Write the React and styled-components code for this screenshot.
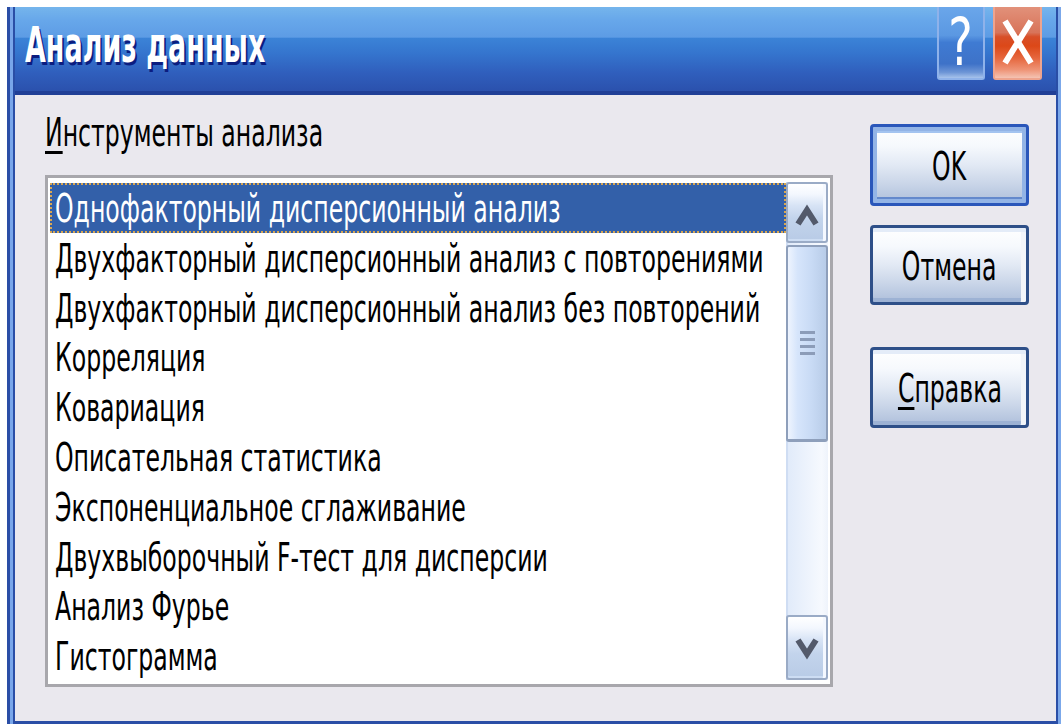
import React from 'react';
import styled, { createGlobalStyle } from 'styled-components';

const GlobalStyle = createGlobalStyle`
  html, body {
    margin: 0;
    padding: 0;
    background: #ffffff;
  }
  body {
    font-family: "DejaVu Sans", "Liberation Sans", sans-serif;
  }
`;

const Page = styled.div`
  width: 1061px;
  height: 724px;
  box-sizing: border-box;
  padding: 7px 0 0 7px;
  overflow: hidden;
`;

/* Window frame: dark / light / dark strips on the left, dark / light on the right */
const Window = styled.div`
  height: 100%;
  box-sizing: border-box;
  display: flex;
  flex-direction: column;
  padding: 0 5px 3px 8px;
  background: linear-gradient(
    to right,
    #2a4ea6 0 3px,
    #79a6ea 3px 6px,
    #2a4ea6 6px calc(100% - 3px),
    #7ba8ea calc(100% - 3px)
  );
`;

const TitleBar = styled.div`
  height: 84px;
  flex: none;
  border-bottom: 4px solid #213f96;
  display: flex;
  align-items: flex-start;
  padding: 0 14px 0 10px;
  background: linear-gradient(
    to bottom,
    #75b5ec 0%,
    #67a7ea 16%,
    #5d9ce5 36%,
    #3b83d7 37%,
    #3575ce 55%,
    #305fbd 78%,
    #2b51ad 100%
  );
`;

const Caption = styled.div`
  flex: 1;
  margin-top: 14px;
  font-size: 49px;
  line-height: 49px;
  font-weight: bold;
  color: #ffffff;
  text-shadow: 3px 3px 0 #0b1d80;
`;

/* Condensed text run: the dialog's face is narrow and tall */
const Txt = styled.span`
  display: inline-block;
  white-space: nowrap;
  transform: scaleX(${(p) => p.$sx || 0.605});
  transform-origin: ${(p) => p.$origin || 'left'} center;
`;

const Key = styled.span`
  text-decoration: underline;
  text-decoration-thickness: 3px;
  text-underline-offset: 5px;
`;

const CaptionButtons = styled.div`
  display: flex;
  gap: 8px;
`;

const HelpButton = styled.div`
  width: 48px;
  height: 73px;
  box-sizing: border-box;
  border: 2px solid #8fb2ea;
  border-top: none;
  border-radius: 0 0 3px 3px;
  background: linear-gradient(
    to bottom,
    #6aa6ea 0%,
    #5b98e2 40%,
    #3f7bd3 50%,
    #3e72c8 80%,
    #6d95d6 92%,
    #a7c3ec 100%
  );
  color: #ffffff;
  font-size: 66px;
  line-height: 66px;
  display: flex;
  justify-content: center;
  padding-top: 3px;
`;

const CloseButton = styled.div`
  width: 49px;
  height: 73px;
  box-sizing: border-box;
  border: 2px solid #eea48e;
  border-top: none;
  border-radius: 0 0 3px 3px;
  background: linear-gradient(
    to bottom,
    #e2917a 0%,
    #d8745a 36%,
    #d84f28 42%,
    #dc4818 55%,
    #e6673e 72%,
    #ee9274 88%,
    #f4c3b3 100%
  );
  display: flex;
  justify-content: center;
  align-items: flex-start;
`;

const Body = styled.div`
  flex: 1;
  background: #eae8ee;
  display: grid;
  grid-template-columns: 788px 159px;
  column-gap: 37px;
  padding-left: 30px;
  align-items: start;
  font-size: 39px;
  color: #000000;
`;

const LeftColumn = styled.div`
  display: flex;
  flex-direction: column;
`;

const FieldLabel = styled.div`
  height: 80px;
  box-sizing: border-box;
  padding-top: 15px;
  line-height: 45px;
`;

const ListBox = styled.div`
  height: 512px;
  box-sizing: border-box;
  border: 3px solid #a8a7ac;
  padding: 4px 2px 4px 2px;
  background: #ffffff;
  display: flex;
`;

const Rows = styled.div`
  flex: 1;
  overflow: hidden;
  padding-top: 1px;
`;

const Row = styled.div`
  height: 49.8px;
  box-sizing: border-box;
  line-height: 52px;
  padding-left: 5px;
  overflow: hidden;
  color: ${(p) => (p.$selected ? '#ffffff' : '#000000')};
  background: ${(p) => (p.$selected ? '#3360a9' : 'transparent')};
  outline: ${(p) => (p.$selected ? '2px dotted #d9a650' : 'none')};
  outline-offset: -2px;
`;

const ScrollBar = styled.div`
  width: 42px;
  display: flex;
  flex-direction: column;
  background: linear-gradient(to right, #cfddf3 0 2px, #e1ebfa 2px, #f6f9fe 85%, #eef3fb);
`;

const ScrollButton = styled.div`
  height: ${(p) => p.$h}px;
  flex: none;
  box-sizing: border-box;
  border: 2px solid #9aabc6;
  border-radius: 3px;
  background: linear-gradient(
    to bottom,
    #ffffff 0%,
    #f3f7fe 18%,
    #d7e3f5 38%,
    #c3d4ec 60%,
    #b8cbe6 100%
  );
  box-shadow: inset -3px 0 0 #f4f8ff, inset 0 -2px 0 #cdddf3;
  display: flex;
  justify-content: center;
`;

const Thumb = styled.div`
  height: 197px;
  flex: none;
  margin-top: 2px;
  box-sizing: border-box;
  border: 2px solid #8e9fbb;
  border-bottom-width: 3px;
  border-radius: 3px;
  background: linear-gradient(to right, #eef4fe 0%, #d6e5fb 25%, #c9dbf5 60%, #b8cce8 100%);
  display: flex;
  flex-direction: column;
  align-items: center;
  justify-content: center;
  gap: 4px;
`;

const Grip = styled.div`
  width: 15px;
  height: 3px;
  background: #8c9cb8;
`;

const Track = styled.div`
  flex: 1;
`;

const RightColumn = styled.div`
  padding-top: 29px;
  display: flex;
  flex-direction: column;
`;

const PushButton = styled.div`
  width: 159px;
  height: ${(p) => p.$h}px;
  margin-bottom: ${(p) => p.$mb || 0}px;
  box-sizing: border-box;
  border: 3px solid ${(p) => (p.$default ? '#2a56ba' : '#2e4f88')};
  border-radius: 4px;
  background: linear-gradient(
    to bottom,
    #ffffff 0%,
    #f6f9fd 25%,
    #e2e9f4 50%,
    #c9d5e8 75%,
    #aebfdb 100%
  );
  box-shadow: ${(p) =>
    p.$default
      ? 'inset 0 0 0 4px #93b4e6, inset 0 6px 0 #a4c4f0, inset 0 -6px 0 #6489cc'
      : 'inset 0 4px 0 #e4ecf8, inset -5px 0 0 #f2f5fa, inset 0 -4px 0 #9db2d4'};
  display: flex;
  align-items: center;
  justify-content: center;
  line-height: 45px;
  padding-top: 2px;
`;

const items = [
  'Однофакторный дисперсионный анализ',
  'Двухфакторный дисперсионный анализ с повторениями',
  'Двухфакторный дисперсионный анализ без повторений',
  'Корреляция',
  'Ковариация',
  'Описательная статистика',
  'Экспоненциальное сглаживание',
  'Двухвыборочный F-тест для дисперсии',
  'Анализ Фурье',
  'Гистограмма',
];

const ArrowUp = () => (
  <svg width="26" height="30" viewBox="0 0 26 30" style={{ marginTop: 15 }}>
    <path d="M4 25 L13 11 L22 25" fill="none" stroke="#535a6b" strokeWidth="6" />
  </svg>
);

const ArrowDown = () => (
  <svg width="26" height="30" viewBox="0 0 26 30" style={{ marginTop: 18 }}>
    <path d="M4 5 L13 19 L22 5" fill="none" stroke="#535a6b" strokeWidth="6" />
  </svg>
);

const CloseGlyph = () => (
  <svg width="32" height="46" viewBox="0 0 32 46" style={{ marginTop: 12 }}>
    <path d="M3 2 L29 44 M29 2 L3 44" stroke="#ffffff" strokeWidth="6" />
  </svg>
);

export default function App() {
  return (
    <>
      <GlobalStyle />
      <Page>
        <Window>
          <TitleBar>
            <Caption>
              <Txt $sx={0.55}>Анализ данных</Txt>
            </Caption>
            <CaptionButtons>
              <HelpButton>
                <Txt $sx={0.7} $origin="center">?</Txt>
              </HelpButton>
              <CloseButton>
                <CloseGlyph />
              </CloseButton>
            </CaptionButtons>
          </TitleBar>
          <Body>
            <LeftColumn>
              <FieldLabel>
                <Txt>
                  <Key>И</Key>нструменты анализа
                </Txt>
              </FieldLabel>
              <ListBox>
                <Rows>
                  {items.map((t, i) => (
                    <Row key={t} $selected={i === 0}>
                      <Txt>{t}</Txt>
                    </Row>
                  ))}
                </Rows>
                <ScrollBar>
                  <ScrollButton $h={61}>
                    <ArrowUp />
                  </ScrollButton>
                  <Thumb>
                    <Grip />
                    <Grip />
                    <Grip />
                    <Grip />
                  </Thumb>
                  <Track />
                  <ScrollButton $h={65}>
                    <ArrowDown />
                  </ScrollButton>
                </ScrollBar>
              </ListBox>
            </LeftColumn>
            <RightColumn>
              <PushButton $h={82} $mb={19} $default>
                <Txt $origin="center">OK</Txt>
              </PushButton>
              <PushButton $h={80} $mb={42}>
                <Txt $origin="center">Отмена</Txt>
              </PushButton>
              <PushButton $h={81}>
                <Txt $origin="center">
                  <Key>С</Key>правка
                </Txt>
              </PushButton>
            </RightColumn>
          </Body>
        </Window>
      </Page>
    </>
  );
}
